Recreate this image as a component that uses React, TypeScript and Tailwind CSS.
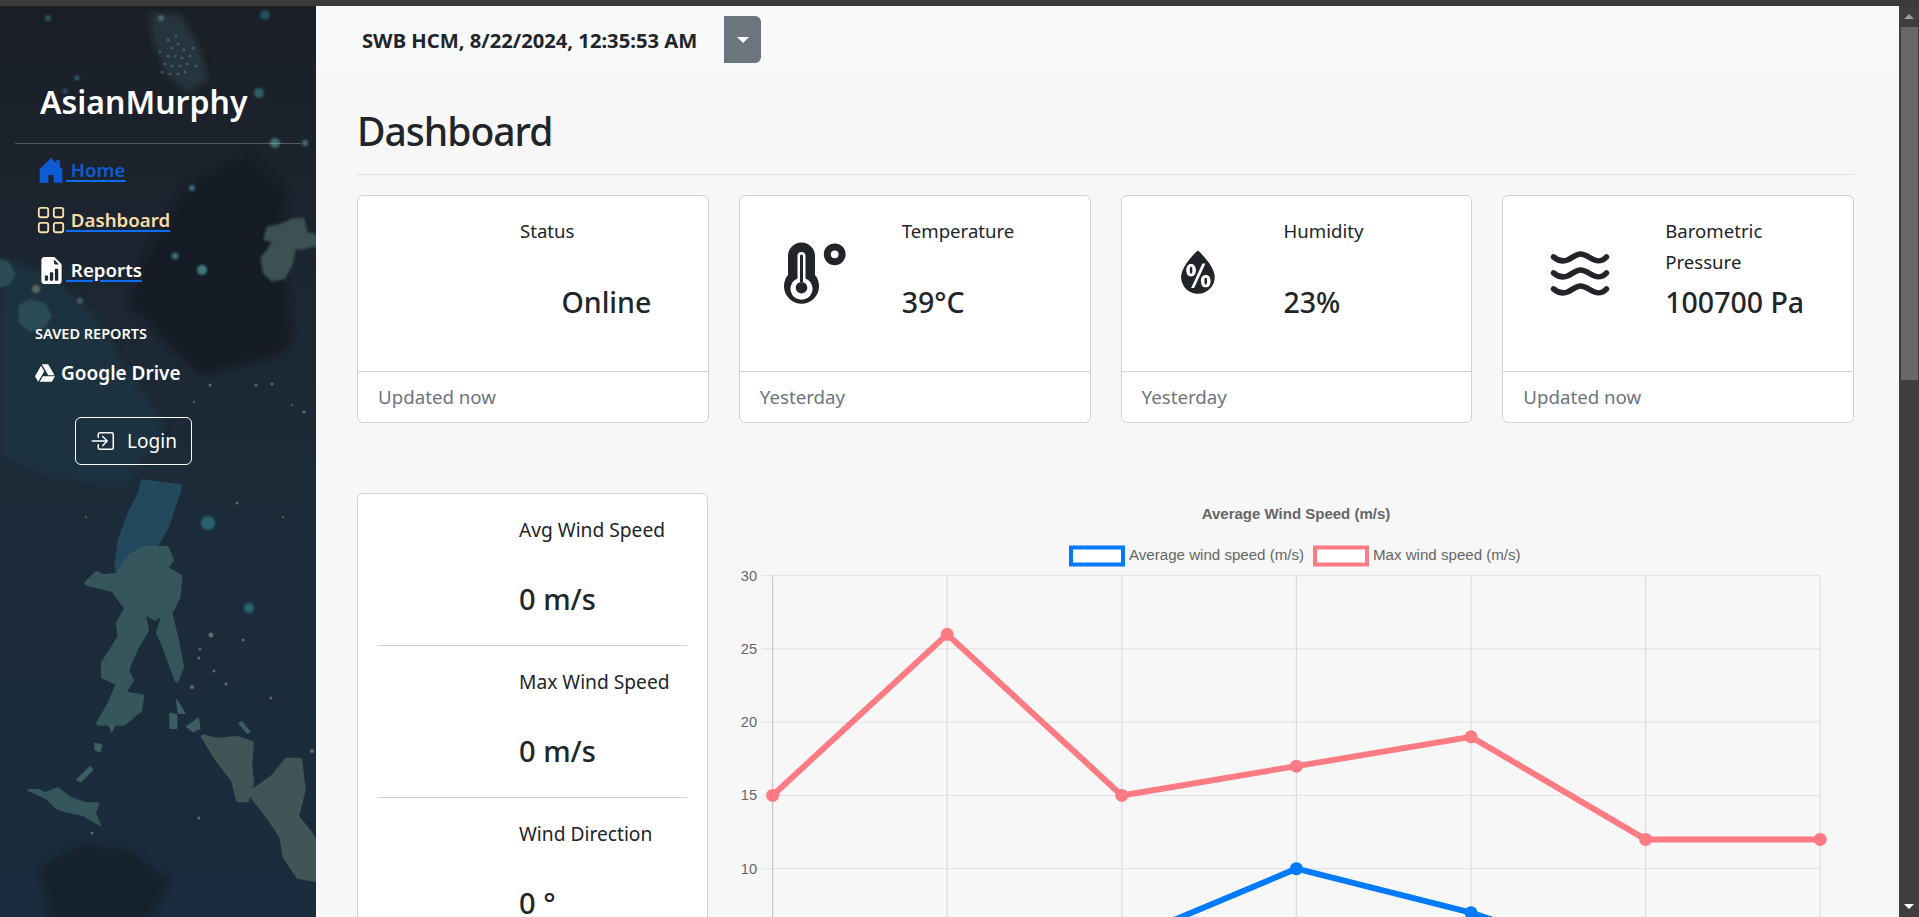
import { BsBoxArrowInRight, BsFileEarmarkBarGraphFill, BsGrid, BsHouseDoorFill } from "react-icons/bs";
import { FaGoogleDrive } from "react-icons/fa";
import { WiHumidity } from "react-icons/wi";

const xAt = (i: number) => 34.6 + i * 174.6;
const yAt = (v: number) => 82.7 + (30 - v) * 14.65;

const maxWind = [15, 26, 15, 17, 19, 12, 12];
const avgWind = [2, 4, 5, 10, 7, 3, 2];

const splash = [
  [172, 42], [178, 38], [184, 44], [168, 50], [175, 50], [182, 52], [190, 50], [165, 58], [172, 60], [180, 60],
  [187, 58], [170, 68], [178, 68], [185, 66], [160, 46], [193, 42], [176, 30], [168, 34], [196, 60], [162, 66],
];

function toPoints(values: number[]) {
  return values.map((v, i) => `${xAt(i)},${yAt(v)}`).join(" ");
}

function SidebarArt() {
  return (
    <svg className="absolute inset-0 h-full w-full" viewBox="0 0 316 911" preserveAspectRatio="none" aria-hidden="true">
      <defs>
        <filter id="soft" x="-20%" y="-20%" width="140%" height="140%"><feGaussianBlur stdDeviation="3" /></filter>
        <filter id="soft2"><feGaussianBlur stdDeviation="1.2" /></filter>
      </defs>
      <g filter="url(#soft)">
        <path d="M128 300l12-45 18-30 30-50 60-30 40 40-10 60 10 40 5 50-15 15-35 8-40 12-30-25-25-30z" fill="#191d26" />
        <path d="M150 8l30 0 20 35 8 30-20 14-22-20-14-35z" fill="#25353e" />
        <path d="M0 250l50 20 45 40 30 50 40 60-40 60L50 470 0 450z" fill="#1e3340" />
        <path d="M40 860l40-22 50 6 40 30-20 40H50z" fill="#15222d" />
      </g>
      <g fill="#4c6f74" opacity="0.65">
        {splash.map(([cx, cy]) => <circle key={`${cx}-${cy}`} cx={cx} cy={cy} r="1.6" />)}
      </g>
      <g filter="url(#soft2)" fill="#2c4d55" stroke="#2c4d55" strokeLinejoin="round" strokeWidth="3">
        <path d="M268 222l14-3 10-5 11-1 3 14 10 3v9l-14 3-8 0-2 14-8 16-12 2-8-8-2-14 8-10 4-7-9-2z" fill="#3a5152" stroke="#3a5152" />
        <path d="M20 300l10-5 14 3 6 12-6 10-14 4-10-8zM0 255l8 2 6 12-6 9-8 2z" />
        <circle cx="80" cy="295" r="3" fill="#4b5a5a" stroke="none" />
        <circle cx="36" cy="283" r="4" fill="#5d6660" stroke="none" />
        <circle cx="202" cy="264" r="5" fill="#3f7a80" stroke="none" />
        <circle cx="175" cy="250" r="3.5" fill="#356d79" stroke="none" />
        <circle cx="259" cy="87" r="5" fill="#2f5e66" stroke="none" />
        <circle cx="275" cy="137" r="5" fill="#3d6b6c" stroke="none" />
        <circle cx="305" cy="137" r="3" fill="#4a6a6a" stroke="none" />
        <circle cx="265" cy="9" r="5" fill="#245060" stroke="none" />
        <circle cx="48" cy="12" r="3" fill="#2a5766" stroke="none" />
        <circle cx="161" cy="12" r="3" fill="#50666a" stroke="none" />
        <circle cx="77" cy="72" r="2.5" fill="#2c5c70" stroke="none" />
        <circle cx="65" cy="85" r="2.5" fill="#274e60" stroke="none" />
        <circle cx="192" cy="182" r="3" fill="#3b6b78" stroke="none" />
        <circle cx="208" cy="517" r="7" fill="#2a6470" stroke="none" />
        <circle cx="249" cy="602" r="5" fill="#2a6470" stroke="none" />
      </g>
      <g transform="translate(0 474) scale(0.3333)" filter="url(#soft2)" strokeLinejoin="round" strokeWidth="14">
        <path d="M430 5l110 15-40 120-40 70-70 50-20 60-20-60 10-80 30-80 30-60z" fill="#24485d" stroke="#24485d" />
        <path d="M390 230l40-25h70l15 35-20 25 45 25-5 60-25 50 20 80 15 80-15 40-40-110-15-30 20-65-30 20-35-20 10 55-30 50-30 70 15 30-25 40 55 10-5 40-50 40h-75l35-60 25-60-45-20v-40l50-80-5-40 25-45-40-55-80-20 30-30 20 10 40-5z" fill="#34565b" stroke="#34565b" />
        <path d="M610 770l40 10 60-5 45 15-5 60 5 60-15 50-25 0-15-60-50-65zM750 940l70-50 40-50 40 0 10 90-20 80 40 50 25 40 0 100-60-10-40-60-10-60-40-60z" fill="#3f5556" stroke="#3f5556" />
        <path d="M85 930h30l20 10 40-15 30 25 50 20 40 0-10 30 15 35-50-30-50-10-30-10-30-30z" fill="#34565b" stroke="#34565b" strokeWidth="6" />
        <path d="M230 900l40-40 8 10-35 35zM285 790l20 5-5 20-15-5zM325 730l20 5-10 20zM530 660l25 40-20 0zM560 740l35-25 5 30-20 10zM510 700l20 5 0 40-20 0zM725 725l25 30-8 5-25-30z" fill="#3a5e63" stroke="#3a5e63" strokeWidth="4" />
      </g>
      <g fill="#7d8584" opacity="0.7">
        <circle cx="211" cy="629" r="2.5" /><circle cx="200" cy="643" r="1.5" /><circle cx="199" cy="652" r="1.5" />
        <circle cx="214" cy="665" r="1.5" /><circle cx="192" cy="681" r="2" /><circle cx="226" cy="678" r="1.5" />
        <circle cx="243" cy="634" r="1.5" /><circle cx="271" cy="692" r="1.5" /><circle cx="312" cy="745" r="2" />
        <circle cx="237" cy="497" r="1.5" /><circle cx="283" cy="511" r="1" /><circle cx="199" cy="812" r="1.5" />
        <circle cx="92" cy="827" r="1.5" /><circle cx="86" cy="511" r="1" /><circle cx="256" cy="379" r="1.5" />
        <circle cx="272" cy="378" r="1.5" /><circle cx="210" cy="379" r="1.5" /><circle cx="194" cy="396" r="1" />
        <circle cx="304" cy="406" r="1.5" /><circle cx="292" cy="399" r="1" />
      </g>
    </svg>
  );
}

function SideLink({ icon, label, color }: { icon: React.ReactNode; label: string; color: string }) {
  return (
    <a className={`flex h-[50px] items-center pl-[37px] text-[18.7px] font-semibold underline decoration-[#0d6efd] decoration-2 underline-offset-[3px] ${color}`}>
      <span className="flex w-[29px] shrink-0 justify-center pr-[1px]">{icon}</span>
      <span className="whitespace-pre"> {label}</span>
    </a>
  );
}

function Sidebar() {
  return (
    <aside className="relative w-[316px] shrink-0 overflow-hidden bg-gradient-to-b from-[#1b1f27] via-[#1c2b38] to-[#1a2c3d] text-white">
      <SidebarArt />
      <div className="relative flex flex-col">
        <h1 className="pl-[40px] pt-[75px] text-[32px] font-semibold leading-[42px]">AsianMurphy</h1>
        <div className="mx-[15px] mt-[20px] border-t border-white/25" />
        <div className="mt-[1px] flex flex-col">
          <SideLink icon={<BsHouseDoorFill size={29} />} label="Home" color="text-[#0d5bd6]" />
          <SideLink icon={<BsGrid size={30} className="-mx-[1px] shrink-0" />} label="Dashboard" color="text-[#f8dcaa]" />
          <SideLink icon={<BsFileEarmarkBarGraphFill size={27} />} label="Reports" color="text-white" />
        </div>
        <div className="mt-[28px] pl-[35px] text-[14.5px] font-semibold leading-[20px]">SAVED REPORTS</div>
        <a className="mt-[17px] flex items-center gap-[6px] pl-[35px] text-[19px] font-semibold leading-[26px]">
          <FaGoogleDrive size={20} />
          Google Drive
        </a>
        <button className="ml-[75px] mt-[31px] flex h-[48px] w-[117px] items-center justify-center gap-[13px] rounded-md border border-white text-[19px]">
          <BsBoxArrowInRight size={24} />
          Login
        </button>
      </div>
    </aside>
  );
}

function ThermometerIcon() {
  return (
    <svg width="120" height="100" viewBox="0 0 120 100" className="shrink-0" aria-hidden="true">
      <path d="M28 53V34a13.5 13.5 0 0 1 27 0v19a17.5 17.5 0 1 1-27 0z" fill="#212529" />
      <path d="M37.5 56.5V34a4 4 0 0 1 8 0v22.5a11 11 0 1 1-8 0z" fill="#fff" />
      <path d="M40 60V34a1.5 1.5 0 0 1 3 0v26z" fill="#212529" />
      <circle cx="41.5" cy="65.7" r="5.8" fill="#212529" />
      <circle cx="74.7" cy="32.3" r="7.4" fill="none" stroke="#212529" strokeWidth={7} />
    </svg>
  );
}

function WavesIcon() {
  const wave = (y: number) =>
    `M19.5 ${y - 1}c5 4 9 5 14 3s8-6 13-6 9 4 14 6 8 1 12-3`;
  return (
    <svg width="100" height="100" viewBox="0 0 100 100" className="shrink-0" aria-hidden="true">
      {[36, 52, 68].map((y) => (
        <path key={y} d={wave(y)} fill="none" stroke="#212529" strokeWidth={5.5} strokeLinecap="round" />
      ))}
    </svg>
  );
}

function StatCard({ icon, label, value, foot, center }: { icon?: React.ReactNode; label: string; value: string; foot: string; center?: boolean }) {
  return (
    <div className="h-[228px] overflow-hidden rounded-md border border-[#d2d2d2] bg-white">
      <div className="flex h-[175px] gap-[21px] px-[20px] pt-[20px]">
        <div className="flex h-[112px] w-[121px] shrink-0 items-center justify-center">{icon}</div>
        <div className="min-w-0 flex-1">
          <div className="h-[61px] text-[18.6px] leading-[30.6px]">{label}</div>
          <div className={`text-[28.5px] font-medium leading-[50px] ${center ? "pl-[5px] text-center" : ""}`}>{value}</div>
        </div>
      </div>
      <div className="flex h-[52px] items-center border-t border-[#d2d2d2] px-[20px] text-[18.7px] text-[#6c757d]">{foot}</div>
    </div>
  );
}

function WindRow({ label, value, last }: { label: string; value: string; last?: boolean }) {
  return (
    <div className={`flex gap-[30px] py-[21px] ${last ? "" : "border-b border-[#cfcfcf]"}`}>
      <div className="w-[111px] shrink-0" />
      <div>
        <div className="h-[59px] text-[19.2px] leading-[30.6px]">{label}</div>
        <div className="text-[29px] font-medium leading-[50px]">{value}</div>
      </div>
    </div>
  );
}

function WindChart() {
  const chartFont = "'Liberation Sans', Arial, sans-serif";
  return (
    <svg width="1116" height="424" viewBox="0 0 1116 424" className="block" style={{ fontFamily: chartFont }} aria-label="Average Wind Speed chart">
      <text x="558" y="26" textAnchor="middle" fontSize="15" fontWeight="700" fill="#666">Average Wind Speed (m/s)</text>
      <rect x="333" y="54.5" width="52" height="17" fill="#fff" stroke="#007bff" strokeWidth="4" />
      <text x="391" y="67" fontSize="15.1" fill="#666">Average wind speed (m/s)</text>
      <rect x="577" y="54.5" width="52" height="17" fill="#fff" stroke="#ff7b84" strokeWidth="4" />
      <text x="635" y="67" fontSize="15.1" fill="#666">Max wind speed (m/s)</text>
      {[30, 25, 20, 15, 10].map((v) => (
        <g key={v}>
          <line x1="24" x2={xAt(6)} y1={yAt(v)} y2={yAt(v)} stroke="#e5e5e5" strokeWidth="1.2" />
          <text x="19" y={yAt(v) + 5} textAnchor="end" fontSize="14.6" fill="#666">{v}</text>
        </g>
      ))}
      {[0, 1, 2, 3, 4, 5, 6].map((i) => (
        <line key={i} x1={xAt(i)} x2={xAt(i)} y1={yAt(30)} y2="424" stroke={i === 0 ? "#c9c9c9" : "#dcdcdc"} strokeWidth="1.2" />
      ))}
      <polyline points={toPoints(avgWind)} fill="none" stroke="#007bff" strokeWidth="6" />
      {avgWind.map((v, i) => <circle key={i} cx={xAt(i)} cy={yAt(v)} r="6.5" fill="#007bff" />)}
      <polyline points={toPoints(maxWind)} fill="none" stroke="#ff7b84" strokeWidth="6" />
      {maxWind.map((v, i) => <circle key={i} cx={xAt(i)} cy={yAt(v)} r="6.5" fill="#ff7b84" />)}
    </svg>
  );
}

function Scrollbar() {
  return (
    <div className="flex w-[20px] shrink-0 flex-col items-center bg-[#3e3e3e]">
      <div className="flex h-[21px] w-full items-center justify-center">
        <div className="h-0 w-0 border-x-[5px] border-b-[5px] border-x-transparent border-b-[#9e9e9e]" />
      </div>
      <div className="ml-[1px] h-[353px] w-[17px] bg-[#686868]" />
      <div className="flex-1" />
      <div className="flex h-[22px] w-full items-center justify-center">
        <div className="h-0 w-0 border-x-[5px] border-t-[5px] border-x-transparent border-t-white" />
      </div>
    </div>
  );
}

export default function App() {
  return (
    <div className="flex h-[917px] flex-col overflow-hidden bg-[#3b3b3b] font-['Noto_Sans','Open_Sans',sans-serif] text-[#212529]">
      <div className="h-[6px] shrink-0" />
      <div className="flex min-h-0 flex-1">
        <Sidebar />
        <main className="min-w-0 flex-1 overflow-hidden bg-[#f7f7f7]">
          <nav className="flex h-[67px] items-center bg-[#f8f9fa] pl-[46px]">
            <span className="w-[362px] pt-[2px] text-[20.2px] font-bold">SWB HCM, 8/22/2024, 12:35:53 AM</span>
            <button className="flex h-[47px] w-[37px] items-center justify-center rounded-r-md bg-[#6c757d]" aria-label="Select station">
              <span className="h-0 w-0 border-x-[6px] border-t-[6px] border-x-transparent border-t-white" />
            </button>
          </nav>
          <div className="pl-[41px] pr-[45px]">
            <div className="border-b border-[#dee2e6] pb-[19px] pt-[34px]">
              <h2 className="text-[39px] font-medium leading-[48px] tracking-[-1px]">Dashboard</h2>
            </div>
            <div className="mt-[20px] grid grid-cols-4 gap-[30px]">
              <StatCard label="Status" value="Online" foot="Updated now" center />
              <StatCard icon={<ThermometerIcon />} label="Temperature" value="39°C" foot="Yesterday" />
              <StatCard icon={<WiHumidity size={68} className="mr-[8px]" />} label="Humidity" value="23%" foot="Yesterday" />
              <StatCard icon={<WavesIcon />} label="Barometric Pressure" value="100700 Pa" foot="Updated now" />
            </div>
            <div className="mt-[70px] grid grid-cols-[351px_1fr] gap-[30px]">
              <div className="rounded-md border border-[#d2d2d2] bg-white px-[20px]">
                <WindRow label="Avg Wind Speed" value="0 m/s" />
                <WindRow label="Max Wind Speed" value="0 m/s" />
                <WindRow label="Wind Direction" value="0 °" last />
              </div>
              <WindChart />
            </div>
          </div>
        </main>
        <Scrollbar />
      </div>
    </div>
  );
}
